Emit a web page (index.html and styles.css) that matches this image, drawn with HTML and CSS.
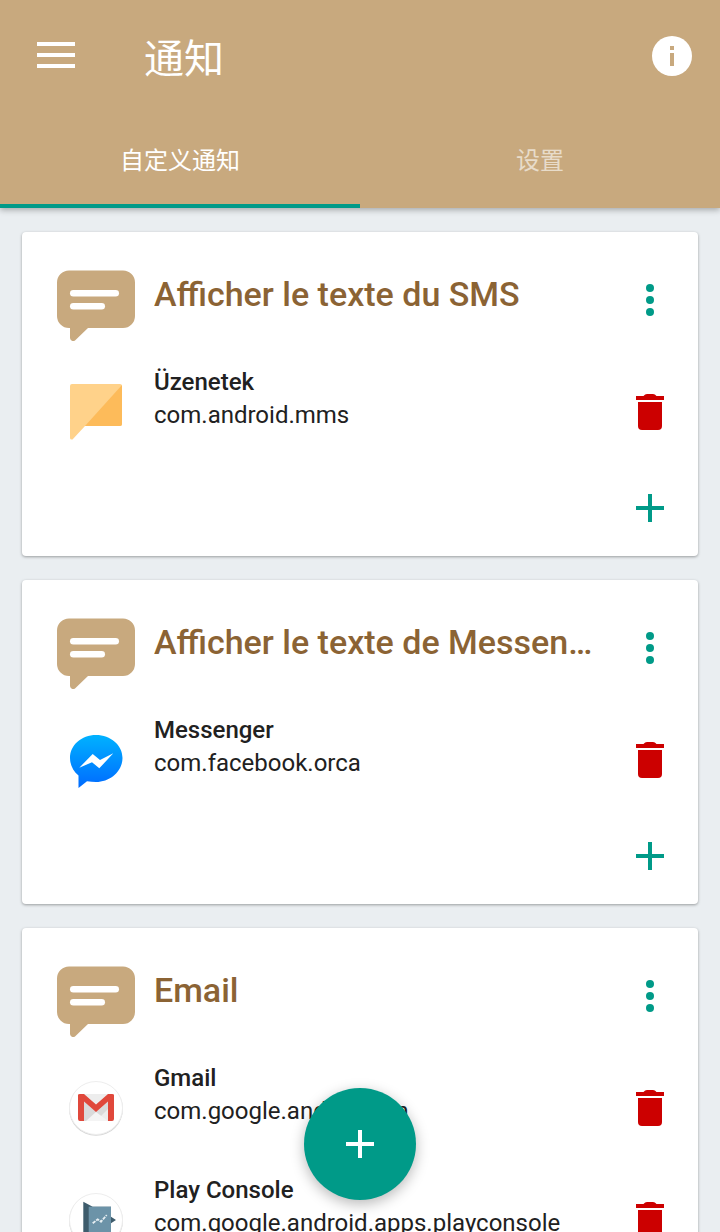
FILE: index.html
```html
<!DOCTYPE html>
<html lang="zh">
<head>
<meta charset="utf-8">
<title>通知</title>
<link rel="stylesheet" href="styles.css">
</head>
<body>
<svg class="defs" width="0" height="0" aria-hidden="true">
  <defs>
    <symbol id="bubble" viewBox="0 0 78 72">
      <path fill="#C8A97E" d="M12 0.5H66A12 12 0 0 1 78 12.5V46A12 12 0 0 1 66 58H31L18 70.500A3.200 3.200 0 0 1 13 68V58H12A12 12 0 0 1 0 46V12.500A12 12 0 0 1 12 0.500Z"/>
      <rect x="13" y="20" width="49" height="6.600" rx="3.300" fill="#fff"/>
      <rect x="13" y="33" width="35" height="6.600" rx="3.300" fill="#fff"/>
    </symbol>
    <symbol id="dots" viewBox="0 0 28 32">
      <circle cx="14" cy="4" r="4" fill="#009A88"/>
      <circle cx="14" cy="16" r="4" fill="#009A88"/>
      <circle cx="14" cy="28" r="4" fill="#009A88"/>
    </symbol>
    <symbol id="trash" viewBox="0 0 28 36">
      <path fill="#CC0000" d="M0 2H7.500Q9 0 11 0H17Q19 0 20.500 2H28V6H0Z"/>
      <path fill="#CC0000" d="M2 8H26V32A4 4 0 0 1 22 36H6A4 4 0 0 1 2 32Z"/>
    </symbol>
    <symbol id="plus" viewBox="0 0 28 28">
      <path fill="currentColor" d="M12 0H16V12H28V16H16V28H12V16H0V12H12Z"/>
    </symbol>
  </defs>
</svg>

<header class="appbar">
  <div class="toolbar">
    <svg class="menu" viewBox="0 0 38 26" aria-hidden="true">
      <path fill="#fff" d="M0 0H38V4H0ZM0 11H38V15H0ZM0 22H38V26H0Z"/>
    </svg>
    <h1 class="page-title">通知</h1>
    <svg class="info" viewBox="0 0 40 40" aria-hidden="true">
      <circle cx="20" cy="20" r="20" fill="#fff"/>
      <rect x="18" y="10" width="4" height="4" fill="#C8A97E"/>
      <rect x="18" y="17" width="4" height="13" fill="#C8A97E"/>
    </svg>
  </div>
  <nav class="tabs">
    <div class="tab tab-active">自定义通知</div>
    <div class="tab">设置</div>
  </nav>
</header>

<main class="content">
  <section class="card">
    <div class="card-head">
      <svg class="bubble"><use href="#bubble"/></svg>
      <h2 class="card-title">Afficher le texte du SMS</h2>
      <svg class="dots"><use href="#dots"/></svg>
    </div>
    <div class="row">
      <svg class="app-icon" viewBox="0 0 54 58" aria-hidden="true">
        <path fill="#FFD28A" d="M3 1H51A2 2 0 0 1 53 3V41A2 2 0 0 1 51 43H16L3.500 56.500Q1 57 1 55V3A2 2 0 0 1 3 1Z"/>
        <path fill="#FDBB5A" d="M53 2V41A2 2 0 0 1 51 43H16Z"/>
      </svg>
      <div class="row-text">
        <div class="app-name">Üzenetek</div>
        <div class="app-pkg">com.android.mms</div>
      </div>
      <svg class="trash"><use href="#trash"/></svg>
    </div>
    <div class="card-foot"><svg class="plus"><use href="#plus"/></svg></div>
  </section>

  <section class="card">
    <div class="card-head">
      <svg class="bubble"><use href="#bubble"/></svg>
      <h2 class="card-title">Afficher le texte de Messenger</h2>
      <svg class="dots"><use href="#dots"/></svg>
    </div>
    <div class="row">
      <svg class="app-icon" viewBox="0 0 54 58" aria-hidden="true">
        <defs><linearGradient id="msgr" x1="0" y1="0" x2="0" y2="1"><stop offset="0" stop-color="#00B2FF"/><stop offset="1" stop-color="#006AFF"/></linearGradient></defs>
        <path fill="url(#msgr)" d="M27 4C12.400 4 1 14.200 1 27C1 34 4.200 40.200 9.500 44.400V57L18 50.300C21 50.800 24 51 27 51C41.600 51 53.500 39.800 53.500 27C53.500 14.200 41.600 4 27 4Z"/>
        <path fill="#fff" d="M10.300 36.700L23.700 23L31 29L44.300 22.300L30.300 37.300L23 31.300Z"/>
      </svg>
      <div class="row-text">
        <div class="app-name">Messenger</div>
        <div class="app-pkg">com.facebook.orca</div>
      </div>
      <svg class="trash"><use href="#trash"/></svg>
    </div>
    <div class="card-foot"><svg class="plus"><use href="#plus"/></svg></div>
  </section>

  <section class="card">
    <div class="card-head">
      <svg class="bubble"><use href="#bubble"/></svg>
      <h2 class="card-title">Email</h2>
      <svg class="dots"><use href="#dots"/></svg>
    </div>
    <div class="row">
      <svg class="app-icon" viewBox="0 0 54 58" aria-hidden="true">
        <circle cx="27" cy="29.800" r="27" fill="#D6D6D6"/>
        <circle cx="27" cy="29" r="26.500" fill="#fff" stroke="#EEEEEE" stroke-width="1"/>
        <path fill="#EDEDED" d="M10 15H44V42H10Z"/>
        <path fill="#DADADA" d="M15 22.500L27 33L39 22.500V30L27 42H15Z"/>
        <path fill="#F4F4F4" d="M17 42L27 33L39 42Z"/>
        <path fill="#E0483B" d="M9 16Q9 15 11 15H15L27 25.500L39 15H43Q45 15 45 16V40Q45 42 43 42H39V22.500L27 33L15 22.500V42H11Q9 42 9 40Z"/>
      </svg>
      <div class="row-text">
        <div class="app-name">Gmail</div>
        <div class="app-pkg">com.google.android.gm</div>
      </div>
      <svg class="trash"><use href="#trash"/></svg>
    </div>
    <div class="row">
      <svg class="app-icon" viewBox="0 0 54 58" aria-hidden="true">
        <circle cx="27" cy="29.800" r="27" fill="#D6D6D6"/>
        <circle cx="27" cy="29" r="26.500" fill="#fff" stroke="#EEEEEE" stroke-width="1"/>
        <path fill="#3E5C6C" d="M14.300 10.700L23.700 15.700H42V25.700L47 29L42 32.300V50H14.300Z"/>
        <path fill="#6C93A8" d="M19.700 15.700H42V50H19.700Z"/>
        <path fill="none" stroke="#E6EEF2" stroke-width="1.800" stroke-dasharray="3.500 1" d="M23.700 32.300L28.700 28.300L32 30.700L37.700 24"/>
      </svg>
      <div class="row-text">
        <div class="app-name">Play Console</div>
        <div class="app-pkg">com.google.android.apps.playconsole</div>
      </div>
      <svg class="trash"><use href="#trash"/></svg>
    </div>
  </section>
</main>

<button class="fab" type="button" aria-label="add"><svg class="plus"><use href="#plus"/></svg></button>
</body>
</html>
```

FILE: styles.css
```css
html, body {
  margin: 0;
  padding: 0;
}
body {
  position: relative;
  width: 720px;
  height: 1232px;
  overflow: hidden;
  background: #EAEEF1;
  font-family: Roboto, "Noto Sans CJK SC", sans-serif;
}
.defs {
  position: absolute;
}
.appbar {
  position: relative;
  background: #C8A97E;
  box-shadow: 0 2px 6px rgba(0, 0, 0, 0.3);
}
.toolbar {
  display: flex;
  align-items: center;
  height: 116px;
  padding: 0 28px 0 36px;
}
.menu {
  width: 38px;
  height: 26px;
  flex: none;
  margin: 0 70px 0 1px;
  position: relative;
  top: -3px;
}
.page-title {
  flex: 1;
  margin: 0;
  color: #fff;
  font-family: "Noto Sans CJK SC", sans-serif;
  font-size: 40px;
  font-weight: 400;
  line-height: 50px;
  position: relative;
  top: -2px;
  left: -1px;
}
.info {
  width: 40px;
  height: 40px;
  flex: none;
  position: relative;
  top: -2px;
}
.tabs {
  display: flex;
  height: 92px;
}
.tab {
  flex: 1;
  display: flex;
  justify-content: center;
  align-items: center;
  padding-bottom: 4px;
  box-sizing: border-box;
  border-bottom: 4px solid transparent;
  color: rgba(255, 255, 255, 0.6);
  font-family: "Noto Sans CJK SC", sans-serif;
  font-size: 24px;
}
.tab-active {
  color: #fff;
  border-bottom-color: #009A88;
}
.content {
  display: flex;
  flex-direction: column;
  gap: 24px;
  padding: 24px 22px 0;
}
.card {
  background: #fff;
  border-radius: 4px;
  box-shadow: 0 1px 3px rgba(0, 0, 0, 0.35);
  padding: 0 34px 0 35px;
}
.card-head {
  display: flex;
  align-items: flex-start;
  height: 124px;
  padding-top: 38px;
  box-sizing: border-box;
}
.bubble {
  width: 78px;
  height: 72px;
  flex: none;
}
.card-title {
  flex: 1;
  min-width: 0;
  margin: 0 30px 0 19px;
  color: #8B6334;
  font-size: 34px;
  font-weight: 500;
  line-height: 48px;
  white-space: nowrap;
  overflow: hidden;
  text-overflow: ellipsis;
}
.dots {
  width: 28px;
  height: 32px;
  flex: none;
  margin-top: 14px;
}
.row {
  display: flex;
  align-items: flex-start;
  height: 112px;
  padding-left: 12px;
}
.app-icon {
  width: 54px;
  height: 58px;
  flex: none;
  margin: 27px 31px 0 0;
}
.row-text {
  flex: 1;
  min-width: 0;
  padding-top: 10px;
}
.app-name {
  color: #212121;
  font-size: 24px;
  font-weight: 500;
  line-height: 33px;
}
.app-pkg {
  color: #212121;
  font-size: 24px;
  line-height: 33px;
  white-space: nowrap;
}
.trash {
  width: 28px;
  height: 36px;
  flex: none;
  margin-top: 38px;
}
.card-foot {
  display: flex;
  justify-content: flex-end;
  height: 88px;
  padding-top: 26px;
  box-sizing: border-box;
}
.plus {
  width: 28px;
  height: 28px;
  color: #009A88;
}
.fab {
  position: absolute;
  left: 304px;
  top: 1088px;
  width: 112px;
  height: 112px;
  padding: 0;
  border: 0;
  border-radius: 50%;
  background: #009A88;
  display: flex;
  align-items: center;
  justify-content: center;
  box-shadow: 0 4px 14px rgba(0, 0, 0, 0.28);
}
.fab .plus {
  color: #fff;
}
```
